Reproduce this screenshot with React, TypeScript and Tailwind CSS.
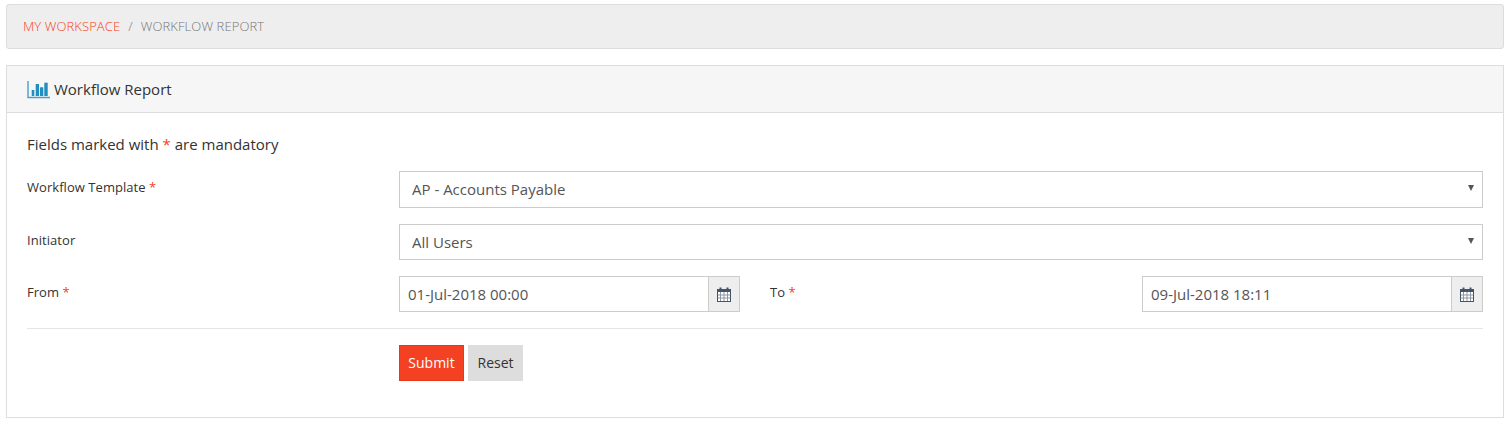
const font = "font-['Open_Sans',sans-serif]"

function ChartIcon() {
  return (
    <svg width="23" height="18" viewBox="0 0 23 18" className="shrink-0">
      <path d="M1 0V16.5H23" fill="none" stroke="#4a9fc8" strokeWidth="1.4" />
      <rect x="4.7" y="9" width="2.6" height="6" fill="#1f8fc1" />
      <rect x="8.7" y="3" width="3.3" height="12" fill="#1f8fc1" />
      <rect x="13" y="6.3" width="3.3" height="8.7" fill="#1f8fc1" />
      <rect x="17.3" y="1.7" width="3.4" height="13.3" fill="#1f8fc1" />
    </svg>
  )
}

function CalendarIcon() {
  return (
    <svg width="14" height="15" viewBox="0 0 14 15">
      <rect x="0.5" y="2.5" width="13" height="12" fill="#fff" stroke="#44546a" />
      <rect x="0" y="2" width="14" height="3" fill="#44546a" />
      <path d="M3.5 0.5V4M10.5 0.5V4" stroke="#44546a" strokeWidth="2" />
      <path d="M3.5 5V14M7 5V14M10.5 5V14M1 8H13M1 11H13" stroke="#8d97a5" strokeWidth="1" />
    </svg>
  )
}

function Req() {
  return <span className="text-[#f44123]">*</span>
}

function SelectField({ value }: { value: string }) {
  return (
    <div className="relative flex-1">
      <select
        defaultValue={value}
        className="block h-full w-full appearance-none rounded-none border border-[#ccc] bg-white px-3 text-[15px] text-[#555] outline-none"
      >
        <option>{value}</option>
      </select>
      <svg width="6" height="6" viewBox="0 0 6 6" className="absolute right-[9px] top-[14px]">
        <path d="M0 0H6L3 6Z" fill="#555" />
      </svg>
    </div>
  )
}

function DateField({ value }: { value: string }) {
  return (
    <div className="flex h-[36px] w-[341px] border border-[#ccc]">
      <input
        readOnly
        value={value}
        className="min-w-0 flex-1 bg-white px-2 text-[15px] text-[#555] outline-none"
      />
      <div className="flex w-[31px] items-center justify-center border-l border-[#ccc] bg-[#eee]">
        <CalendarIcon />
      </div>
    </div>
  )
}

export default function App() {
  return (
    <div className={`${font} min-h-[432px] bg-white pl-[6px] pr-[4px] pt-[4px]`}>
      <div className="mb-4 flex h-[45px] items-center gap-2 rounded-[3px] border border-[#ddd] bg-[#eee] px-4 text-[13px] font-light tracking-[0.1px]">
        <span className="text-[#f44123]">MY WORKSPACE</span>
        <span className="text-[#777]">/</span>
        <span className="text-[#777]">WORKFLOW REPORT</span>
      </div>

      <div className="h-[353px] border border-[#ddd]">
        <div className="flex h-[47px] items-center gap-[4px] border-b border-[#ddd] bg-[#f6f6f6] px-5 pt-[1px] text-[15px] text-[#333]">
          <ChartIcon />
          <span>Workflow Report</span>
        </div>

        <div className="pl-5 pr-5 pt-[21px]">
          <p className="mb-[17px] text-[15px] leading-5 text-[#333]">
            Fields marked with <Req /> are mandatory
          </p>

          <div className="mb-4 flex h-[37px]">
            <label className="w-[372px] shrink-0 pt-[7px] text-[13px] tracking-[0.05px] text-[#333]">
              Workflow Template <Req />
            </label>
            <SelectField value="AP - Accounts Payable" />
          </div>

          <div className="mb-4 flex h-[36px]">
            <label className="w-[372px] shrink-0 pt-[7px] text-[13px] tracking-[0.05px] text-[#333]">
              Initiator
            </label>
            <SelectField value="All Users" />
          </div>

          <div className="flex h-[36px]">
            <label className="w-[372px] shrink-0 pt-[7px] text-[13px] tracking-[0.05px] text-[#333]">
              From <Req />
            </label>
            <DateField value="01-Jul-2018 00:00" />
            <label className="flex-1 pl-[30px] pt-[7px] text-[13px] tracking-[0.05px] text-[#333]">
              To <Req />
            </label>
            <DateField value="09-Jul-2018 18:11" />
          </div>

          <div className="my-4 border-t border-[#e5e5e5]" />

          <div className="flex gap-[4px] pl-[372px]">
            <button className="h-[36px] w-[65px] border border-[#e8381a] bg-[#f44123] text-sm text-white">
              Submit
            </button>
            <button className="h-[36px] w-[55px] bg-[#ddd] text-sm text-[#333]">Reset</button>
          </div>
        </div>
      </div>
    </div>
  )
}
